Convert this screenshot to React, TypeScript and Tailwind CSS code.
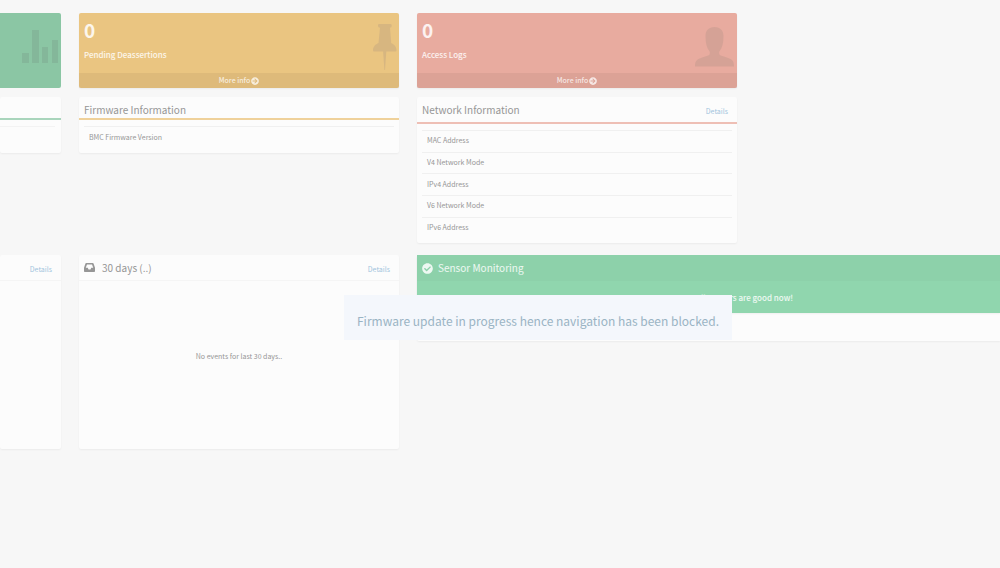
import type { ReactNode } from 'react';
import { FaArrowCircleRight, FaCheckCircle } from 'react-icons/fa';

const NETWORK_ROWS = [
  'MAC Address',
  'V4 Network Mode',
  'IPv4 Address',
  'V6 Network Mode',
  'IPv6 Address',
];

function BarsIcon() {
  return (
    <svg viewBox="0 0 37 34" className="h-[34px] w-[37px]" fill="currentColor" aria-hidden="true">
      <path d="M0 23h7v10H0zM10 0h7v33h-7zM20 17h6v16h-6zM30 10h6v23h-6z" />
    </svg>
  );
}

function PinIcon() {
  return (
    <svg viewBox="0 0 24 46" className="h-[46px] w-6" fill="currentColor" aria-hidden="true">
      <path d="M6 0h11.5c1 0 1.2.7 1.2 1.8 0 1.200-.6 2-1.700 2l1.200 15.200c3 1.200 5.300 3.700 5.300 7 0 1-.5 1.500-1.500 1.500h-8.700L12 46h-.6l-1.300-18.500H1.500C.5 27.500 0 27 0 26c0-3.300 2.500-5.800 5.500-7L7 3.800C5.700 3.800 5 3 5 1.800 5 .7 5.200 0 6 0z" />
    </svg>
  );
}

function PersonIcon() {
  return (
    <svg viewBox="0 0 39 40" className="h-10 w-[39px]" fill="currentColor" aria-hidden="true">
      <path d="M19.5 0c5.800 0 9 3.500 9 9 0 7-1.200 12-4 15.300-.7 1-.5 3.200.7 3.900 2.300 1.300 6.500 1.800 9.800 3.500 3 1.500 4 3.300 4 7.800H0c0-4.500 1-6.300 4-7.800 3.300-1.700 7.500-2.200 9.800-3.500 1.200-.7 1.400-2.900.7-3.900-2.800-3.300-4-8.300-4-15.300 0-5.500 3.200-9 9-9z" />
    </svg>
  );
}

function InboxIcon() {
  return (
    <svg viewBox="0 0 22 18" className="h-[9px] w-[11px]" fill="currentColor" aria-hidden="true">
      <path
        fillRule="evenodd"
        d="M4.500 0h13c.8 0 1.300.4 1.600 1.200L22 9.500V16c0 1.200-.8 2-2 2H2c-1.200 0-2-.8-2-2V9.500l2.900-8.300C3.200.4 3.700 0 4.500 0zM6 3L3.500 9.500h4L9 13h4l1.500-3.500h4L16 3z"
      />
    </svg>
  );
}

function StatTile({
  label,
  icon,
  color,
}: {
  label: string;
  icon: ReactNode;
  color: string;
}) {
  return (
    <div className={`relative rounded-xs shadow-xs ${color}`}>
      <div className="h-[60px] px-[5px] pt-1 text-white/85">
        <h3 className="mb-1 text-[19px] leading-[26px] font-bold">0</h3>
        <p className="text-[8px] leading-[16px] font-medium">{label}</p>
      </div>
      {icon}
      <a
        href="#more"
        className="flex h-[15px] items-center justify-center gap-px bg-black/5 text-[7px] font-medium text-white/75"
      >
        More info <FaArrowCircleRight className="size-2" />
      </a>
    </div>
  );
}

function Panel({ className = '', children }: { className?: string; children: ReactNode }) {
  return <section className={`rounded-xs bg-[#fcfcfc] shadow-xs ${className}`}>{children}</section>;
}

function DetailsLink() {
  return (
    <a href="#details" className="pt-[3px] text-[7px] leading-[12px] text-[#a2c4dc]">
      Details
    </a>
  );
}

function InfoTable({ rows, height }: { rows: string[]; height: string }) {
  return (
    <table className={`w-full ${height}`}>
      <tbody>
        {rows.map((row) => (
          <tr key={row} className="border-t border-t-[#f0f0f0]">
            <td className="px-[5px] pb-[2px] text-[7px] leading-[12px]">{row}</td>
          </tr>
        ))}
      </tbody>
    </table>
  );
}

export default function App() {
  return (
    <main className="relative min-h-screen overflow-hidden bg-[#f7f7f7] pt-[13px] font-['Noto_Sans_CJK_SC',sans-serif] text-[#969696]">
      <div className="grid grid-cols-[61fr_320fr_320fr_245fr] gap-x-[18px] gap-y-3">
        <div className="flex flex-col gap-[9px]">
          <div className="relative h-[75px] rounded-r-xs bg-[#8bc6a4]">
            <div className="absolute top-[17px] right-[2px] text-[#84b79a]">
              <BarsIcon />
            </div>
          </div>
          <Panel className="pb-[5px]">
            <div className="h-[23px] border-b-2 border-b-[#a9d5bc]" />
            <div className="mt-[6px] mr-[6px] h-[22px] border-t border-t-[#f3f3f3]" />
          </Panel>
        </div>

        <div className="flex flex-col gap-[9px]">
          <StatTile
            label="Pending Deassertions"
            color="bg-[#eac581]"
            icon={
              <div className="absolute top-[11px] right-[2px] text-[#d7b680]">
                <PinIcon />
              </div>
            }
          />
          <Panel className="pb-[5px]">
            <header className="flex h-[23px] items-start border-b-2 border-b-[#efd19a] px-[5px] pt-[5px]">
              <h2 className="text-[10px] leading-[16px]">Firmware Information</h2>
            </header>
            <div className="px-[5px] pt-[6px]">
              <InfoTable rows={['BMC Firmware Version']} height="h-[22px]" />
            </div>
          </Panel>
        </div>

        <div className="flex flex-col gap-[9px]">
          <StatTile
            label="Access Logs"
            color="bg-[#e8ab9f]"
            icon={
              <div className="absolute top-[14px] right-[3px] text-[#d5a296]">
                <PersonIcon />
              </div>
            }
          />
          <Panel className="pb-[5px]">
            <header className="flex h-[27px] items-start justify-between border-b-2 border-b-[#eebfb5] pt-[5px] pr-[9px] pl-[5px]">
              <h2 className="text-[10px] leading-[16px]">Network Information</h2>
              <DetailsLink />
            </header>
            <div className="px-[5px] pt-[6px]">
              <InfoTable rows={NETWORK_ROWS} height="h-[108px]" />
            </div>
          </Panel>
        </div>

        <Panel className="col-start-1 h-[194px]">
          <header className="flex h-[26px] items-start justify-end border-b border-b-[#f5f5f5] pt-[5px] pr-[9px]">
            <DetailsLink />
          </header>
        </Panel>

        <Panel className="h-[194px]">
          <header className="flex h-[26px] items-start gap-[7px] border-b border-b-[#f5f5f5] pt-[5px] pr-[9px] pl-[5px]">
            <div className="pt-[3px]">
              <InboxIcon />
            </div>
            <h2 className="mr-auto text-[10px] leading-[16px]">30 days (..)</h2>
            <DetailsLink />
          </header>
          <p className="pt-[69px] text-center text-[7px] leading-[12px]">No events for last 30 days..</p>
        </Panel>

        <Panel className="col-span-2 h-[86px] rounded-r-none">
          <div className="rounded-tl-xs bg-[#90d6ae] text-white/85 shadow-xs">
            <header className="flex h-[26px] items-center gap-[5px] bg-[#8dd1aa] px-[5px]">
              <FaCheckCircle className="size-[11px]" />
              <h2 className="text-[10px] leading-[16px]">Sensor Monitoring</h2>
            </header>
            <p className="h-8 pt-[11px] pl-[72px] text-center text-[8px] leading-[12px] font-medium">
              All sensors are good now!
            </p>
          </div>
        </Panel>
      </div>

      <div
        role="alert"
        className="absolute top-[295px] left-[344px] flex h-[45px] items-center bg-[#f4f7fc] px-[13px] pt-[6px] text-[12px] leading-[20px] whitespace-nowrap text-[#9ab4c4]"
      >
        Firmware update in progress hence navigation has been blocked.
      </div>
    </main>
  );
}
